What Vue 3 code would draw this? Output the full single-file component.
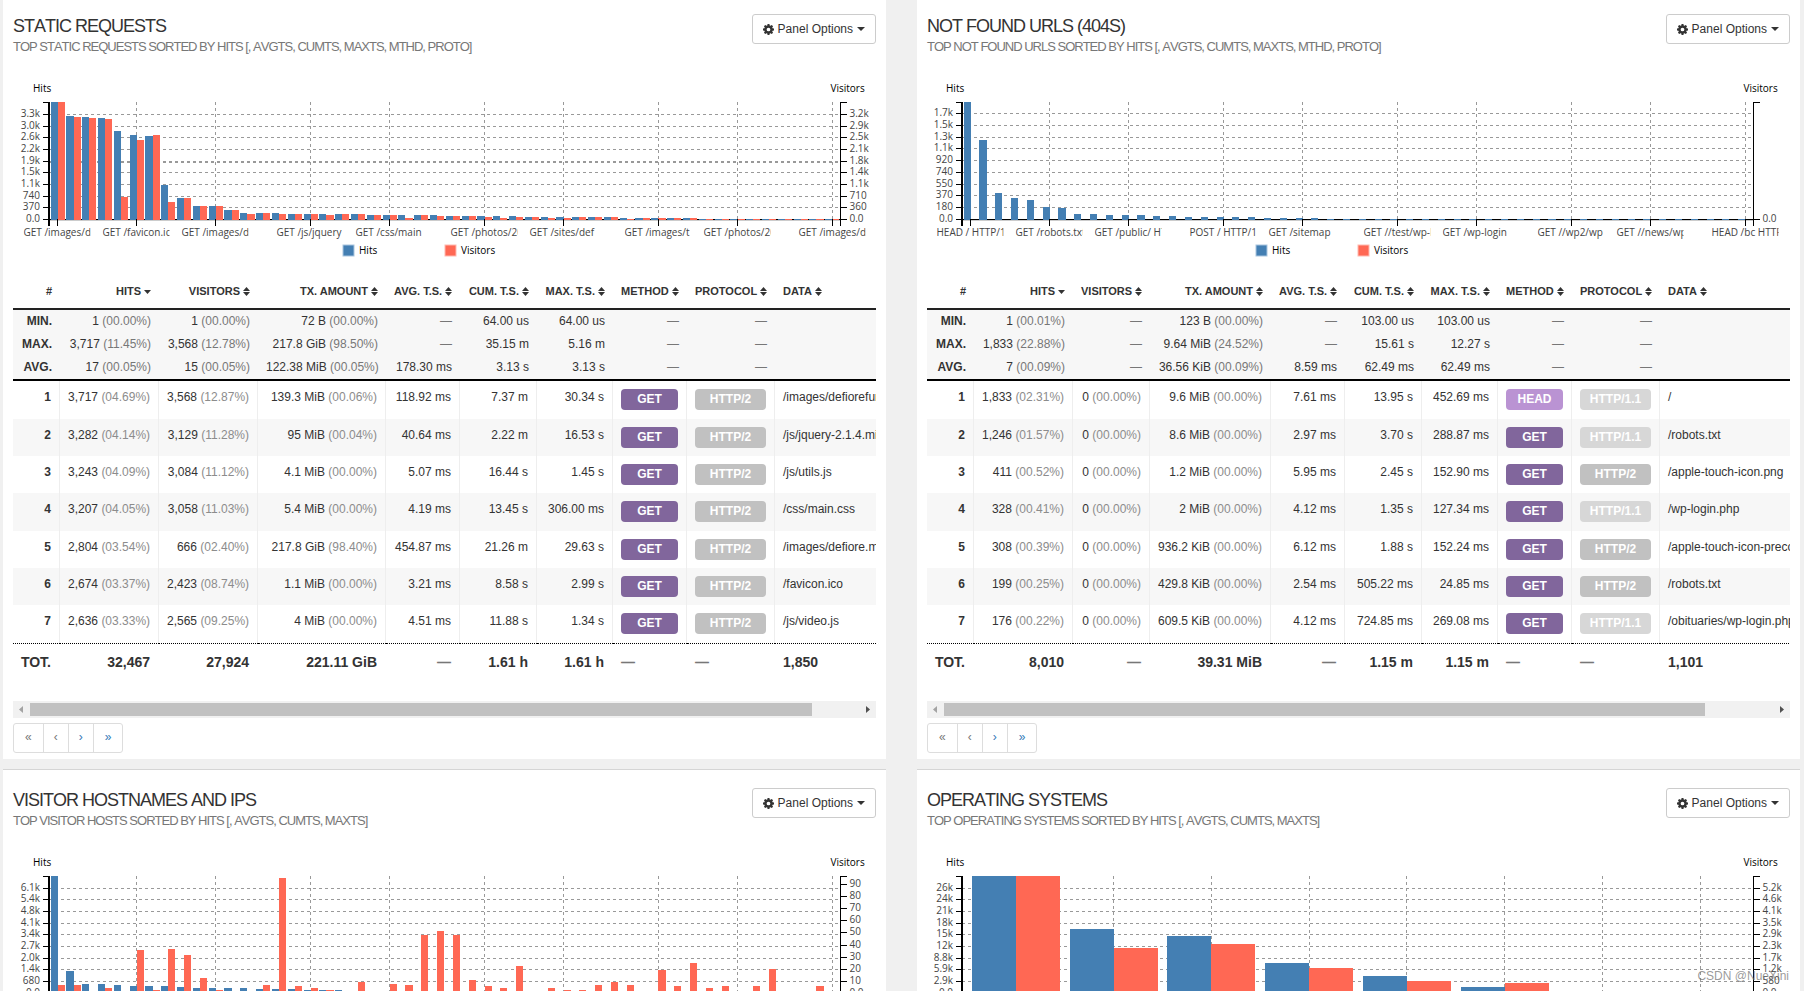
<script setup>
import { computed, onBeforeUnmount, onMounted, ref } from 'vue'

const PLOT_TOP = 32
const PLOT_HEIGHT = 117
const BASE = PLOT_TOP + PLOT_HEIGHT

const fill = (n, v) => Array(n).fill(v)
const DENSE_TICKS = [0, 5, 10, 16, 21, 27, 32, 38, 43, 49]

const columns = (widths) =>
  ['#', 'Hits', 'Visitors', 'Tx. Amount', 'Avg. T.S.', 'Cum. T.S.', 'Max. T.S.', 'Method', 'Protocol', 'Data'].map(
    (label, i) => ({ label, width: widths[i], sort: i === 0 ? '' : i === 1 ? 'desc' : 'both', left: i > 6 })
  )

const panels = [
  {
    id: 'static',
    title: 'Static Requests',
    sub: 'Top static requests sorted by hits [, avgts, cumts, maxts, mthd, proto]',
    chart: {
      left: 36,
      maxHits: 3717,
      maxVisitors: 3568,
      step: 370,
      rightStep: 355,
      heavy: 5,
      leftLabels: ['0.0', '370', '740', '1.1k', '1.5k', '1.9k', '2.2k', '2.6k', '3.0k', '3.3k'],
      rightLabels: ['0.0', '360', '710', '1.1k', '1.4k', '1.8k', '2.1k', '2.5k', '2.9k', '3.2k'],
      ticks: DENSE_TICKS,
      names: ['GET /images/de', 'GET /favicon.ico', 'GET /images/de', 'GET /js/jquery', 'GET /css/main', 'GET /photos/20', 'GET /sites/def', 'GET /images/t', 'GET /photos/20', 'GET /images/de'],
      hits: [3717, 3282, 3243, 3207, 2804, 2674, 2636, 1090, 680, 425, 425, 300, 212, 212, 212, ...fill(5, 180), ...fill(5, 148), ...fill(5, 116), ...fill(6, 85), ...fill(5, 53), ...fill(9, 21)],
      visitors: [3568, 3129, 3084, 3058, 666, 2423, 2565, 530, 650, 405, 405, 285, 172, 203, 172, 172, 172, 142, 172, 172, 142, 142, 51, 142, 112, 112, 112, 81, 51, 81, 81, 51, 51, 81, 81, 81, 20, ...fill(4, 51), ...fill(9, 20)]
    },
    table: {
      width: 915,
      cols: columns([47, 99, 99, 128, 74, 77, 76, 74, 88, 153]),
      meta: [
        ['Min.', ['1', '00.00'], ['1', '00.00'], ['72 B', '00.00'], '—', '64.00 us', '64.00 us', '—', '—'],
        ['Max.', ['3,717', '11.45'], ['3,568', '12.78'], ['217.8 GiB', '98.50'], '—', '35.15 m', '5.16 m', '—', '—'],
        ['Avg.', ['17', '00.05'], ['15', '00.05'], ['122.38 MiB', '00.05'], '178.30 ms', '3.13 s', '3.13 s', '—', '—']
      ],
      rows: [
        [['3,717', '04.69'], ['3,568', '12.87'], ['139.3 MiB', '00.06'], '118.92 ms', '7.37 m', '30.34 s', 'GET', 'HTTP/2', '/images/defiorefun'],
        [['3,282', '04.14'], ['3,129', '11.28'], ['95 MiB', '00.04'], '40.64 ms', '2.22 m', '16.53 s', 'GET', 'HTTP/2', '/js/jquery-2.1.4.min.js'],
        [['3,243', '04.09'], ['3,084', '11.12'], ['4.1 MiB', '00.00'], '5.07 ms', '16.44 s', '1.45 s', 'GET', 'HTTP/2', '/js/utils.js'],
        [['3,207', '04.05'], ['3,058', '11.03'], ['5.4 MiB', '00.00'], '4.19 ms', '13.45 s', '306.00 ms', 'GET', 'HTTP/2', '/css/main.css'],
        [['2,804', '03.54'], ['666', '02.40'], ['217.8 GiB', '98.40'], '454.87 ms', '21.26 m', '29.63 s', 'GET', 'HTTP/2', '/images/defiore.mp4'],
        [['2,674', '03.37'], ['2,423', '08.74'], ['1.1 MiB', '00.00'], '3.21 ms', '8.58 s', '2.99 s', 'GET', 'HTTP/2', '/favicon.ico'],
        [['2,636', '03.33'], ['2,565', '09.25'], ['4 MiB', '00.00'], '4.51 ms', '11.88 s', '1.34 s', 'GET', 'HTTP/2', '/js/video.js']
      ],
      total: ['Tot.', '32,467', '27,924', '221.11 GiB', '—', '1.61 h', '1.61 h', '—', '—', '1,850']
    }
  },
  {
    id: 'notfound',
    title: 'Not Found URLs (404s)',
    sub: 'Top not found URLs sorted by hits [, avgts, cumts, maxts, mthd, proto]',
    chart: {
      left: 35,
      maxHits: 1833,
      maxVisitors: 1,
      step: 184,
      rightStep: 1,
      leftLabels: ['0.0', '180', '370', '550', '740', '920', '1.1k', '1.3k', '1.5k', '1.7k'],
      rightLabels: ['0.0'],
      ticks: DENSE_TICKS,
      names: ['HEAD / HTTP/1', 'GET /robots.txt', 'GET /public/ HT', 'POST / HTTP/1', 'GET /sitemap', 'GET //test/wp-l', 'GET /wp-login', 'GET //wp2/wp', 'GET //news/wp', 'HEAD /bc HTTP'],
      hits: [1833, 1246, 411, 328, 308, 199, 176, 89, 89, 73, 73, 73, 57, 57, ...fill(5, 42), ...fill(4, 26), ...fill(27, 10)],
      visitors: fill(50, 0)
    },
    table: {
      width: 940,
      cols: columns([47, 99, 77, 121, 74, 77, 76, 74, 88, 207]),
      meta: [
        ['Min.', ['1', '00.01'], '—', ['123 B', '00.00'], '—', '103.00 us', '103.00 us', '—', '—'],
        ['Max.', ['1,833', '22.88'], '—', ['9.64 MiB', '24.52'], '—', '15.61 s', '12.27 s', '—', '—'],
        ['Avg.', ['7', '00.09'], '—', ['36.56 KiB', '00.09'], '8.59 ms', '62.49 ms', '62.49 ms', '—', '—']
      ],
      rows: [
        [['1,833', '02.31'], ['0', '00.00'], ['9.6 MiB', '00.00'], '7.61 ms', '13.95 s', '452.69 ms', 'HEAD', 'HTTP/1.1', '/'],
        [['1,246', '01.57'], ['0', '00.00'], ['8.6 MiB', '00.00'], '2.97 ms', '3.70 s', '288.87 ms', 'GET', 'HTTP/1.1', '/robots.txt'],
        [['411', '00.52'], ['0', '00.00'], ['1.2 MiB', '00.00'], '5.95 ms', '2.45 s', '152.90 ms', 'GET', 'HTTP/2', '/apple-touch-icon.png'],
        [['328', '00.41'], ['0', '00.00'], ['2 MiB', '00.00'], '4.12 ms', '1.35 s', '127.34 ms', 'GET', 'HTTP/1.1', '/wp-login.php'],
        [['308', '00.39'], ['0', '00.00'], ['936.2 KiB', '00.00'], '6.12 ms', '1.88 s', '152.24 ms', 'GET', 'HTTP/2', '/apple-touch-icon-precomposed.png'],
        [['199', '00.25'], ['0', '00.00'], ['429.8 KiB', '00.00'], '2.54 ms', '505.22 ms', '24.85 ms', 'GET', 'HTTP/2', '/robots.txt'],
        [['176', '00.22'], ['0', '00.00'], ['609.5 KiB', '00.00'], '4.12 ms', '724.85 ms', '269.08 ms', 'GET', 'HTTP/1.1', '/obituaries/wp-login.php']
      ],
      total: ['Tot.', '8,010', '—', '39.31 MiB', '—', '1.15 m', '1.15 m', '—', '—', '1,101']
    }
  },
  {
    id: 'hosts',
    title: 'Visitor Hostnames and IPs',
    sub: 'Top visitor hosts sorted by hits [, avgts, cumts, maxts]',
    chart: {
      left: 36,
      maxHits: 6800,
      maxVisitors: 97,
      step: 680,
      rightStep: 10,
      leftLabels: ['0.0', '680', '1.4k', '2.0k', '2.7k', '3.4k', '4.1k', '4.8k', '5.4k', '6.1k'],
      rightLabels: ['0.0', '10', '20', '30', '40', '50', '60', '70', '80', '90'],
      ticks: DENSE_TICKS,
      names: [],
      hits: [6800, 1300, 560, 560, 500, 440, 440, 440, 380, 330, 330, 330, 330, 270, 270, 270, 210, 210, 210, ...fill(31, 110)],
      visitors: [7, 7, 1, 4, 1, 36, 3, 37, 32, 13, 3, 1, 1, 7, 96, 6, 4, 3, 1, 9, 1, 8, 7, 48, 52, 48, 11, 6, 4, 23, 1, 4, 3, 3, 7, 9, 7, 1, 19, 6, 25, 4, 6, 1, 6, 20, 1, 1, 6, 1]
    }
  },
  {
    id: 'os',
    title: 'Operating Systems',
    sub: 'Top operating systems sorted by hits [, avgts, cumts, maxts]',
    chart: {
      left: 35,
      maxHits: 29400,
      maxVisitors: 5800,
      step: 2940,
      rightStep: 580,
      leftLabels: ['0.0', '2.9k', '5.9k', '8.8k', '12k', '15k', '18k', '21k', '24k', '26k'],
      rightLabels: ['0.0', '580', '1.2k', '1.7k', '2.3k', '2.9k', '3.5k', '4.1k', '4.6k', '5.2k'],
      ticks: [0, 1, 2, 3, 4, 5, 6, 7],
      names: [],
      hits: [29400, 16200, 14450, 7650, 4400, 1650, 100, 60],
      visitors: [5800, 2260, 2460, 1270, 620, 520, 30, 10]
    }
  }
]

const root = ref(null)
const chartWidth = ref(863)
let observer

onMounted(() => {
  const el = root.value.querySelector('.chart-wrap')
  const measure = () => {
    chartWidth.value = Math.max(320, Math.round(el.clientWidth))
  }
  measure()
  observer = new ResizeObserver(measure)
  observer.observe(el)
})
onBeforeUnmount(() => observer?.disconnect())

function layoutChart(c) {
  const n = c.hits.length
  const plot = chartWidth.value - 71
  const step = plot / (n + 0.1)
  const half = step * 0.45
  const bandX = (i) => c.left + step * 0.1 + i * step
  const bar = (x, value, max) => {
    const x0 = Math.round(x)
    const top = Math.round(BASE + 0.3 - (PLOT_HEIGHT * value) / max)
    return { x: x0, w: Math.round(x + half) - x0, y: top, h: value ? BASE + 1 - top : 0 }
  }
  const scaleTick = (label, v, max) => ({ label, y: Math.floor(BASE + 0.3 - (PLOT_HEIGHT * v) / max) + 0.5 })
  return {
    left: c.left,
    right: c.left + plot - 0.5,
    mid: Math.round(chartWidth.value / 2) + c.left - 36,
    heavy: c.heavy,
    hitBars: c.hits.map((v, i) => bar(bandX(i), v, c.maxHits)),
    visitorBars: c.visitors.map((v, i) => bar(bandX(i) + half, v, c.maxVisitors)),
    leftTicks: c.leftLabels.map((l, i) => scaleTick(l, i * c.step, c.maxHits)),
    rightTicks: c.rightLabels.map((l, i) => scaleTick(l, i * c.rightStep, c.maxVisitors)),
    xTicks: c.ticks.map((i, k) => ({ x: Math.floor(bandX(i) + half) + 0.5, label: c.names[k] }))
  }
}

const view = computed(() => panels.map((p) => ({ ...p, c: layoutChart(p.chart) })))
const thumb = (t) => Math.min(100, (chartWidth.value / t.width) * 100) + '%'
const protoClass = (v) => (v === 'HTTP/2' ? 'p2' : 'p1')
const labelY = (t) => Math.floor(t.y) + 3
</script>

<template>
  <main ref="root" class="dashboard">
    <section v-for="p in view" :key="p.id" class="panel">
      <header class="panel-head">
        <div>
          <h2>{{ p.title }}</h2>
          <p>{{ p.sub }}</p>
        </div>
        <button type="button" class="options">
          <svg class="gear" viewBox="0 0 20 20" aria-hidden="true">
            <path fill-rule="evenodd" d="M8.3 0h3.4l.5 2.6 1.5.6 2.2-1.5 2.4 2.4-1.5 2.2.6 1.5 2.6.5v3.4l-2.6.5-.6 1.5 1.5 2.2-2.4 2.4-2.2-1.5-1.5.6-.5 2.6H8.3l-.5-2.6-1.5-.6-2.2 1.5-2.4-2.4 1.5-2.2-.6-1.5L0 11.7V8.3l2.6-.5.6-1.5-1.5-2.2 2.4-2.4 2.2 1.5 1.5-.6zM10 6.6a3.4 3.4 0 1 0 0 6.8 3.4 3.4 0 0 0 0-6.8z" />
          </svg>
          <span>Panel Options</span>
          <i class="caret"></i>
        </button>
      </header>

      <div class="chart-wrap">
        <svg class="chart" :width="chartWidth" height="205" role="img" :aria-label="p.title">
          <g class="grid">
            <line v-for="(t, i) in p.c.xTicks.slice(1)" :key="'v' + i" :x1="t.x" :x2="t.x" y1="149" y2="32" />
            <line
              v-for="(t, i) in p.c.leftTicks.slice(1)"
              :key="'h' + i"
              :class="{ heavy: p.c.heavy === i + 1 }"
              :x1="p.c.left"
              :x2="p.c.right"
              :y1="t.y"
              :y2="t.y"
            />
          </g>
          <line class="under" :x1="p.c.left" :x2="p.c.right" y1="150.5" y2="150.5" />
          <line class="axis" :x1="p.c.left" :x2="p.c.right" y1="149.5" y2="149.5" />
          <g class="hits">
            <rect v-for="(b, i) in p.c.hitBars" :key="i" :x="b.x" :y="b.y" :width="b.w" :height="b.h" />
          </g>
          <g class="visitors">
            <rect v-for="(b, i) in p.c.visitorBars" :key="i" :x="b.x" :y="b.y" :width="b.w" :height="b.h" />
          </g>
          <g class="axis">
            <line class="thick" :x1="p.c.left" :x2="p.c.left" y1="32" y2="156" />
            <line :x1="p.c.left - 6" :x2="p.c.left" y1="32.5" y2="32.5" />
            <line v-for="(t, i) in p.c.leftTicks" :key="'l' + i" :x1="p.c.left - 6" :x2="p.c.left" :y1="t.y" :y2="t.y" />
            <line :x1="p.c.right" :x2="p.c.right" y1="32" y2="156" />
            <line :x1="p.c.right" :x2="p.c.right + 6" y1="32.5" y2="32.5" />
            <line v-for="(t, i) in p.c.rightTicks" :key="'r' + i" :x1="p.c.right" :x2="p.c.right + 6" :y1="t.y" :y2="t.y" />
            <line v-for="(t, i) in p.c.xTicks" :key="'x' + i" :x1="t.x" :x2="t.x" y1="149" y2="156" />
          </g>
          <g class="ticks">
            <text v-for="(t, i) in p.c.leftTicks" :key="'l' + i" class="end" :x="p.c.left - 9" :y="labelY(t)">{{ t.label }}</text>
            <text v-for="(t, i) in p.c.rightTicks" :key="'r' + i" :x="p.c.right + 9" :y="labelY(t)">{{ t.label }}</text>
            <template v-for="(t, i) in p.c.xTicks" :key="'x' + i">
              <svg v-if="t.label" :x="t.x - 34" y="154" width="67" height="17">
                <text x="0" y="12">{{ t.label }}</text>
              </svg>
            </template>
          </g>
          <g class="names">
            <text :x="p.c.left - 16" y="22">Hits</text>
            <text :x="p.c.right - 10" y="22">Visitors</text>
            <template v-if="p.table">
              <rect class="key-hits" :x="p.c.mid - 102" y="175" width="11" height="11" />
              <text :x="p.c.mid - 86" y="184">Hits</text>
              <rect class="key-visitors" :x="p.c.mid" y="175" width="11" height="11" />
              <text :x="p.c.mid + 16" y="184">Visitors</text>
            </template>
          </g>
        </svg>
      </div>

      <template v-if="p.table">
        <div class="scroller">
          <table :style="{ width: Math.max(chartWidth, p.table.width) + 'px' }">
            <colgroup>
              <col v-for="c in p.table.cols" :key="c.label" :style="{ width: c.label === 'Data' ? 'auto' : c.width + 'px' }" />
            </colgroup>
            <thead>
              <tr>
                <th v-for="c in p.table.cols" :key="c.label" scope="col" :class="{ left: c.left }">
                  <template v-if="!c.sort">{{ c.label }}</template>
                  <button v-else type="button" class="sort">
                    <span>{{ c.label }}</span>
                    <svg width="7" height="9" viewBox="0 0 7 9" aria-hidden="true">
                      <path v-if="c.sort === 'both'" d="M3.500 0L7 4H0zM0 5h7L3.500 9z" />
                      <path v-else d="M0 3h7L3.500 7z" />
                    </svg>
                  </button>
                </th>
              </tr>
            </thead>
            <tbody class="meta">
              <tr v-for="m in p.table.meta" :key="m[0]">
                <th scope="row">{{ m[0] }}</th>
                <td v-for="(v, i) in m.slice(1)" :key="i" :class="{ none: v === '—' }">
                  <template v-if="Array.isArray(v)">{{ v[0] }} <span class="pct">({{ v[1] }}%)</span></template>
                  <template v-else>{{ v }}</template>
                </td>
                <td></td>
              </tr>
            </tbody>
            <tbody class="data">
              <tr v-for="(r, n) in p.table.rows" :key="n">
                <th scope="row">{{ n + 1 }}</th>
                <td v-for="(v, i) in r" :key="i" :class="{ left: i > 5 }">
                  <span v-if="i === 6" class="badge" :class="v === 'GET' ? 'get' : 'head'">{{ v }}</span>
                  <span v-else-if="i === 7" class="badge" :class="protoClass(v)">{{ v }}</span>
                  <template v-else-if="Array.isArray(v)">{{ v[0] }} <span class="pct">({{ v[1] }}%)</span></template>
                  <template v-else>{{ v }}</template>
                </td>
              </tr>
            </tbody>
            <tfoot>
              <tr>
                <td v-for="(v, i) in p.table.total" :key="i" :class="{ left: i > 6, none: v === '—' }">{{ v }}</td>
              </tr>
            </tfoot>
          </table>
        </div>
        <div class="scrollbar" aria-hidden="true">
          <svg width="17" height="17" viewBox="0 0 17 17"><path class="dim" d="M10 5v7L6 8.500z" /></svg>
          <div class="track"><div class="thumb" :style="{ width: thumb(p.table) }"></div></div>
          <svg width="17" height="17" viewBox="0 0 17 17"><path d="M7 5v7l4-3.500z" /></svg>
        </div>
        <nav class="pager" aria-label="Pages">
          <a class="off" href="#">«</a>
          <a class="off" href="#">‹</a>
          <a href="#">›</a>
          <a href="#">»</a>
        </nav>
      </template>
    </section>
    <div class="watermark">CSDN @NueXini</div>
  </main>
</template>

<style>
html,
body {
  background: #f0f0f0;
}
</style>

<style scoped>
.dashboard {
  position: relative;
  display: grid;
  grid-template-columns: minmax(0, 1fr) minmax(0, 1fr);
  align-content: start;
  gap: 10px 31px;
  box-sizing: border-box;
  height: 100vh;
  overflow: hidden;
  padding: 0 4px 0 3px;
  background: #f0f0f0;
  color: #333;
  font: 12px/17px 'Liberation Sans', Arial, sans-serif;
}
.panel {
  background: #fff;
  border-top: 1px solid #d5d5d5;
  padding: 18px 10px 6px;
}
.panel:nth-child(-n + 2) {
  border-top: 0;
  padding-top: 14px;
}
.panel-head {
  display: flex;
  justify-content: space-between;
  align-items: flex-start;
  padding-bottom: 15px;
}
h2,
.panel-head p {
  font-kerning: none;
  font-weight: 400;
  letter-spacing: -1px;
  text-transform: uppercase;
}
h2 {
  margin: 2px 0 3px;
  font-size: 18px;
  line-height: 20px;
}
.panel-head p {
  margin: 0;
  color: #777;
  font-size: 13px;
  line-height: 16px;
}
.options {
  display: flex;
  align-items: center;
  gap: 4px;
  height: 30px;
  padding: 0 10px;
  border: 1px solid #ccc;
  border-radius: 3px;
  background: #fff;
  color: #333;
  font: inherit;
}
.gear {
  width: 11px;
  height: 11px;
  fill: #333;
}
.caret {
  border: 4px solid transparent;
  border-top-color: #333;
  border-bottom: 0;
}
.chart-wrap {
  overflow: hidden;
}
.chart {
  display: block;
  font: 10px 'Open Sans', 'Noto Sans', sans-serif;
}
.grid line {
  stroke: #999;
  stroke-dasharray: 3 3;
  shape-rendering: crispEdges;
}
.grid .heavy {
  stroke-width: 2;
}
.under {
  stroke: #ccc;
  shape-rendering: crispEdges;
}
.axis,
.axis line {
  stroke: #000;
  shape-rendering: crispEdges;
}
.axis .thick {
  stroke-width: 2;
}
.hits rect {
  fill: #447fb3;
  shape-rendering: crispEdges;
}
.visitors rect {
  fill: #ff6854;
  shape-rendering: crispEdges;
}
.ticks text {
  fill: #444;
}
.names text {
  fill: #000;
}
.end {
  text-anchor: end;
}
.key-hits {
  fill: #447fb3;
  stroke: #a9c6df;
}
.key-visitors {
  fill: #ff6854;
  stroke: #ffb9b0;
}
.scroller {
  overflow: hidden;
  padding-bottom: 21px;
}
table {
  table-layout: fixed;
  border-collapse: separate;
  border-spacing: 0;
}
th,
td {
  box-sizing: border-box;
  padding: 8px;
  text-align: right;
  vertical-align: top;
  white-space: nowrap;
}
.left {
  text-align: left;
}
thead th {
  border-bottom: 2px solid #222;
  font-size: 11px;
  text-transform: uppercase;
}
.sort {
  display: inline-flex;
  align-items: center;
  gap: 3px;
  padding: 0;
  border: 0;
  background: none;
  color: inherit;
  font: inherit;
  text-transform: inherit;
}
.sort svg {
  fill: #333;
}
.meta th,
.meta td {
  padding: 3px 8px;
  background: #f7f7f7;
}
.meta th {
  text-transform: uppercase;
}
.meta tr:last-child > * {
  height: 25px;
  border-bottom: 2px solid #000;
}
.meta .pct,
.none {
  color: #777;
}
.data tr {
  height: 37px;
}
.data tr:nth-child(3n + 1) {
  height: 38px;
}
.data tr:nth-child(even) {
  background: #f7f7f7;
}
.data th,
.data td {
  padding-bottom: 7px;
  border-right: 1px solid #eee;
}
.data td:last-child {
  border-right: 0;
}
.data .pct {
  color: #8c8c8c;
}
.badge {
  display: block;
  border-radius: 4px;
  color: #fff;
  font-weight: 700;
  line-height: 21px;
  text-align: center;
}
.get {
  background: #81669c;
}
.head {
  background: #ba93d3;
}
.p2 {
  background: #c1c1c1;
}
.p1 {
  background: #d7d7d7;
}
tfoot td {
  border-top: 1px dotted #000;
  padding-right: 9px;
  font-size: 14px;
  line-height: 20px;
  font-weight: 700;
}
tfoot td:first-child {
  padding-left: 0;
  text-transform: uppercase;
}
.scrollbar {
  display: flex;
  height: 17px;
  background: #f1f1f1;
}
.scrollbar path {
  fill: #505050;
}
.scrollbar .dim {
  fill: #a3a3a3;
}
.track {
  flex: 1;
  padding: 2px 0;
}
.thumb {
  height: 13px;
  background: #c1c1c1;
}
.pager {
  display: flex;
  width: max-content;
  margin-top: 5px;
  border: 1px solid #ddd;
  border-radius: 3px;
}
.pager a {
  padding: 5px 10px 6px;
  color: #337ab7;
  text-decoration: none;
}
.pager a:first-child,
.pager a:last-child {
  padding-left: 11px;
  padding-right: 11px;
}
.pager a + a {
  border-left: 1px solid #ddd;
}
.pager .off {
  color: #777;
}
.watermark {
  position: absolute;
  right: 15px;
  bottom: 6px;
  color: rgba(110, 110, 110, 0.7);
}
</style>
